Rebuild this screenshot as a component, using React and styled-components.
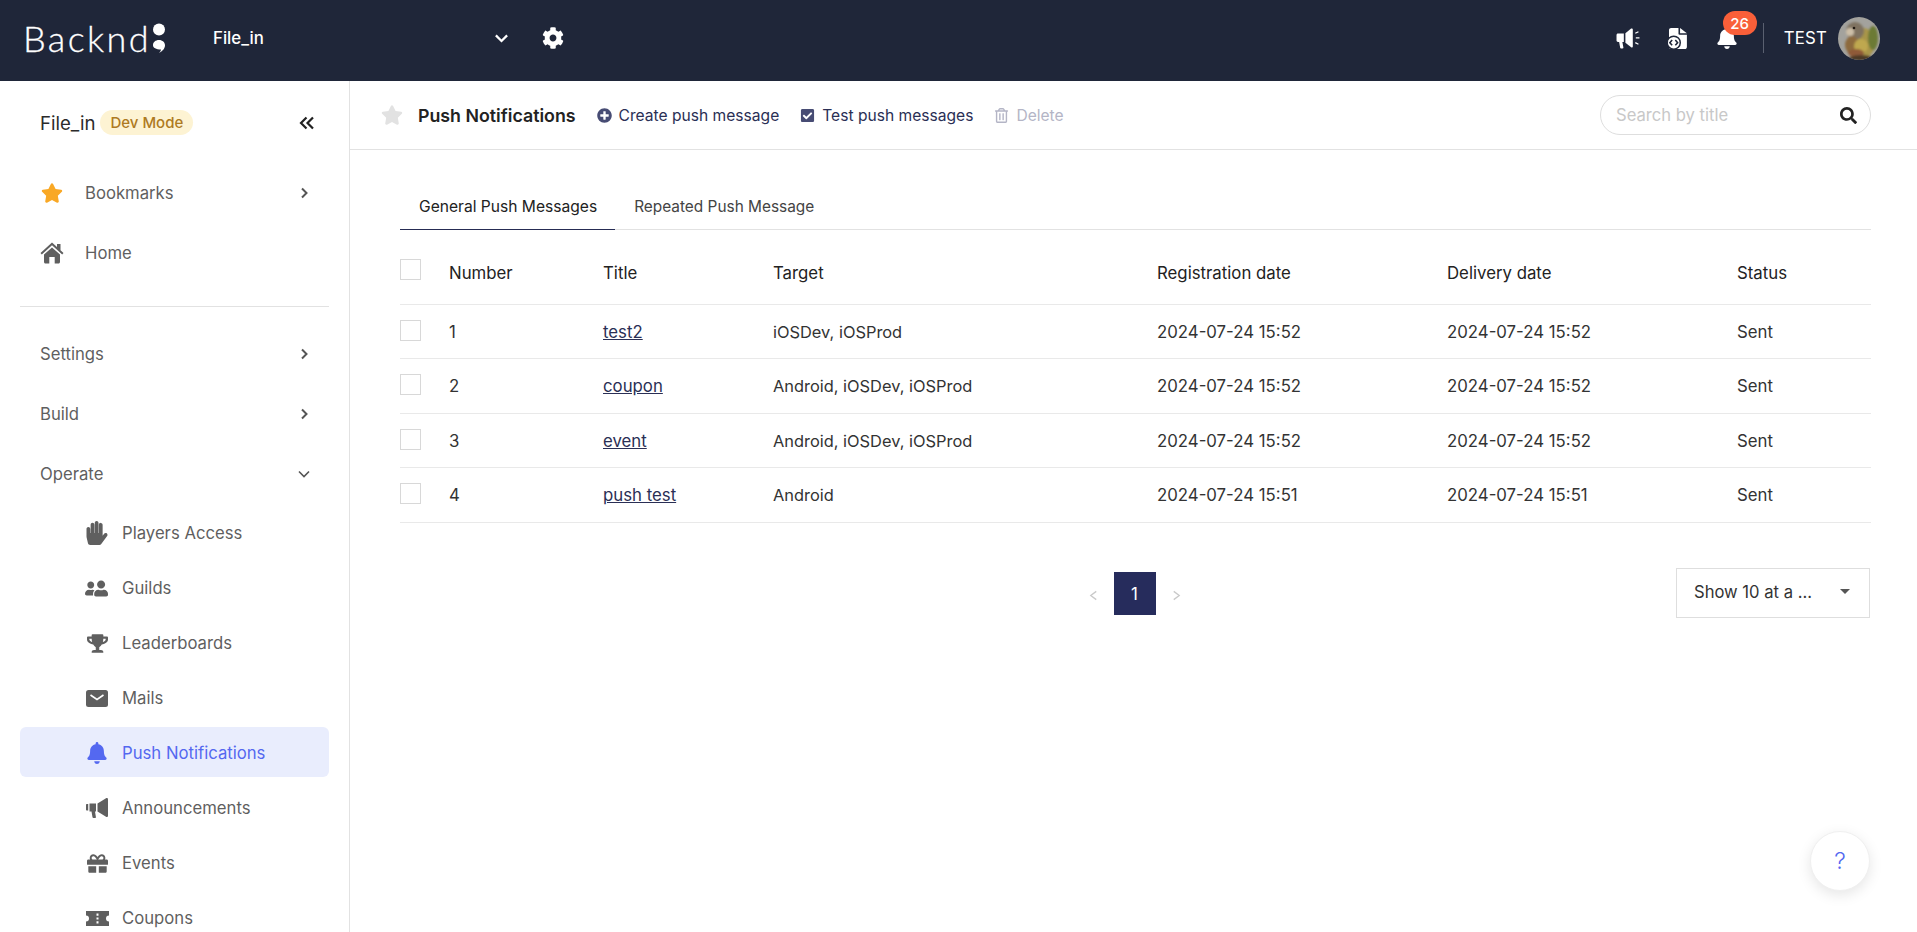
import React from 'react';
import styled, { createGlobalStyle } from 'styled-components';
import {
  FaStar, FaHandPaper, FaUserFriends, FaTrophy, FaBell, FaGift,
  FaCog, FaPlusCircle, FaCheckSquare, FaRegTrashAlt, FaSearch,
} from 'react-icons/fa';

const GlobalStyle = createGlobalStyle`
  html, body {
    margin: 0;
    height: 100%;
    overflow: hidden;
    background: #fff;
    font-family: Inter, "Liberation Sans", sans-serif;
    font-size: 16px;
    color: #2b2b2b;
  }
  * { box-sizing: border-box; }
`;

const Page = styled.div`
  display: flex;
  flex-direction: column;
  height: 100vh;
  position: relative;
`;

const TopBar = styled.header`
  flex: 0 0 81px;
  display: flex;
  align-items: center;
  padding: 0 37px 5px 24px;
  background: #1f2639;
  color: #fff;
`;

const Logo = styled.div`
  display: flex;
  align-items: center;
  width: 190px;
  gap: 1px;
  margin-left: -1px;
`;

const LogoText = styled.span`
  font-family: Lato, sans-serif;
  font-weight: 300;
  font-size: 36px;
  letter-spacing: 2.4px;
  line-height: 40px;
  -webkit-text-stroke: 0.3px #fff;
`;

const ProjectName = styled.div`
  width: 281px;
  font-size: 16.8px;
  font-weight: 500;
`;

const TopIconButton = styled.span`
  display: inline-flex;
  position: relative;
  align-items: center;
  justify-content: center;
  color: #fff;
  font-size: ${p => p.$size || 20}px;
  margin-left: ${p => p.$gap || 0}px;
`;

const TopRight = styled.div`
  margin-left: auto;
  display: flex;
  align-items: center;
`;

const Badge = styled.span`
  position: absolute;
  left: 7px;
  top: -16px;
  width: 34px;
  height: 24px;
  border-radius: 12px;
  background: #f95f39;
  color: #fff;
  font-size: 15px;
  font-weight: 500;
  display: flex;
  align-items: center;
  justify-content: center;
`;

const TopDivider = styled.span`
  width: 1px;
  height: 30px;
  background: #5a6070;
  margin: 0 20px 0 25px;
`;

const UserName = styled.span`
  font-size: 16.8px;
  margin-right: 11px;
  letter-spacing: 0.2px;
`;

const Avatar = styled.svg`
  width: 42px;
  height: 43px;
  border-radius: 50%;
  display: block;
`;

const Body = styled.div`
  flex: 1;
  display: flex;
  min-height: 0;
`;

const Sidebar = styled.aside`
  flex: 0 0 350px;
  border-right: 1px solid #e2e2e2;
  padding: 0 20px;
  overflow: hidden;
`;

const Brand = styled.div`
  height: 87px;
  display: flex;
  align-items: center;
  padding: 0 14px 4px 20px;
`;

const BrandName = styled.span`
  font-size: 18.6px;
  color: #2b2b2b;
  margin-right: 5px;
`;

const DevBadge = styled.span`
  height: 25px;
  padding: 0 10px;
  border-radius: 13px;
  background: #fdf3d3;
  color: #ae7a22;
  font-size: 15px;
  font-weight: 500;
  display: flex;
  align-items: center;
`;

const Collapse = styled.svg`
  margin-left: auto;
  width: 16px;
  height: 16px;
  fill: none;
  stroke: #222;
  stroke-width: 2.2;
`;

const MenuItem = styled.div`
  height: 50px;
  display: flex;
  align-items: center;
  border-radius: 6px;
  font-size: 16.7px;
  color: ${p => (p.$active ? '#5468f0' : '#5f5f5f')};
  background: ${p => (p.$active ? '#e9edfd' : 'transparent')};
  padding: ${p => (p.$sub ? 2 : 0)}px 19px 0 ${p => (p.$sub ? 64 : 20)}px;
  margin-bottom: ${p => (p.$sub ? 5 : 10)}px;
`;

const MenuIcon = styled.span`
  flex: 0 0 ${p => (p.$sub ? 26 : 24)}px;
  margin-right: ${p => (p.$sub ? 12 : 21)}px;
  display: flex;
  align-items: center;
  justify-content: center;
  font-size: ${p => p.$size || 22}px;
  color: ${p => p.$color || 'inherit'};
  transform: ${p => (p.$flip ? 'scaleX(-1)' : 'none')};
`;

const Chevron = styled.svg`
  margin-left: auto;
  width: 12px;
  height: 12px;
  fill: none;
  stroke: ${p => p.$color || '#555'};
  stroke-width: ${p => p.$weight || 2};
`;

const TopChevron = styled(Chevron)`
  margin-left: 0;
  width: 15px;
  height: 15px;
`;

const SideDivider = styled.div`
  height: 1px;
  background: #e2e2e2;
  margin: 28px 0 22px;
`;

const SubMenu = styled.div`
  margin-top: -2px;
`;

const Main = styled.main`
  flex: 1;
  min-width: 0;
`;

const Toolbar = styled.div`
  height: 69px;
  display: flex;
  align-items: center;
  border-bottom: 1px solid #e2e2e2;
  padding: 0 46px 0 31px;
`;

const BookmarkStar = styled.span`
  display: flex;
  color: #e2e2e2;
  font-size: 22px;
  margin-right: 15px;
`;

const PageTitle = styled.h1`
  margin: 0 21px 0 0;
  font-size: 17.8px;
  font-weight: 600;
  color: #222;
`;

const ToolAction = styled.button`
  display: flex;
  align-items: center;
  gap: 7px;
  padding: 0;
  margin-right: 21px;
  border: 0;
  background: none;
  font: inherit;
  font-size: 15.6px;
  color: ${p => (p.disabled ? '#b4b5c6' : '#2a2f55')};
  svg {
    color: ${p => (p.disabled ? '#b4b5c6' : '#474c74')};
    font-size: 15px;
  }
`;

const SearchBox = styled.div`
  margin-left: auto;
  width: 271px;
  height: 40px;
  border: 1px solid #dedede;
  border-radius: 20px;
  display: flex;
  align-items: center;
  padding: 0 13px 0 15px;
  svg { font-size: 17px; color: #222; flex: none; }
`;

const SearchInput = styled.input`
  flex: 1;
  min-width: 0;
  border: 0;
  outline: 0;
  padding: 0;
  font: inherit;
  font-size: 16.6px;
  &::placeholder { color: #c8c8c8; opacity: 1; }
`;

const Content = styled.div`
  padding: 33px 46px 0 50px;
`;

const Tabs = styled.div`
  display: flex;
  height: 47px;
  border-bottom: 1px solid #e2e2e2;
`;

const Tab = styled.div`
  display: flex;
  align-items: center;
  padding: 0 18px 0 19px;
  font-size: ${p => (p.$active ? 15.6 : 15.4)}px;
  color: ${p => (p.$active ? '#222' : '#444')};
  border-bottom: 1px solid ${p => (p.$active ? '#262c54' : 'transparent')};
  margin-bottom: -1px;
`;

const Table = styled.table`
  width: 100%;
  table-layout: fixed;
  border-collapse: collapse;
`;

const Th = styled.th`
  height: 74px;
  padding: ${p => (p.$box ? 8 : 13)}px 0 0;
  text-align: left;
  font-size: 16.8px;
  font-weight: 400;
  color: #222;
  border-bottom: 1px solid #e9e9e9;
  width: ${p => p.$w}px;
`;

const Td = styled.td`
  height: 54.5px;
  padding: 1px 0 0;
  font-size: ${p => p.$size || 16.8}px;
  color: #333;
  border-bottom: 1px solid #e9e9e9;
`;

const Check = styled.span`
  display: block;
  width: 21px;
  height: 21px;
  border: 1px solid #d8d8d8;
  margin-top: -3px;
`;

const TitleLink = styled.a`
  color: #2a2f55;
  text-decoration: underline;
`;

const Footer = styled.div`
  display: grid;
  grid-template-columns: 1fr auto 1fr;
  align-items: center;
  margin-top: 45px;
`;

const Pager = styled.div`
  grid-column: 2;
  display: flex;
  align-items: center;
  gap: 15px;
  padding: 2px 2px 0 0;
  svg { width: 11px; height: 11px; fill: none; stroke: #c9c9c9; stroke-width: 1.4; margin-top: 3px; }
`;

const PageNumber = styled.span`
  width: 42px;
  height: 43px;
  background: #262c5c;
  color: #fff;
  display: flex;
  align-items: center;
  justify-content: center;
  font-size: 16.8px;
`;

const PageSize = styled.div`
  grid-column: 3;
  justify-self: end;
  width: 194px;
  height: 50px;
  margin-right: 1px;
  border: 1px solid #dedede;
  display: flex;
  align-items: center;
  justify-content: space-between;
  padding: 0 19px 2px 17px;
  font-size: 16.6px;
  color: #333;
`;

const Caret = styled.span`
  width: 0;
  height: 0;
  border-left: 5px solid transparent;
  border-right: 5px solid transparent;
  border-top: 5px solid #555;
`;

const HelpButton = styled.button`
  position: absolute;
  left: 1810px;
  top: 831px;
  width: 60px;
  height: 60px;
  border-radius: 50%;
  border: 1px solid #f0f0f0;
  background: #fff;
  box-shadow: 0 4px 14px rgba(0, 0, 0, 0.1);
  color: #5468f0;
  font: inherit;
  font-size: 23px;
  font-weight: 300;
`;

const ChevronRight = () => (
  <Chevron viewBox="0 0 12 12"><polyline points="4,1.5 8.5,6 4,10.5" /></Chevron>
);

const ChevronDown = ({ weight }) => (
  <Chevron viewBox="0 0 12 12" $weight={weight}><polyline points="1,3.5 6,8.5 11,3.5" /></Chevron>
);

const HomeIcon = () => (
  <svg width="24" height="24" viewBox="0 0 24 24" fill="#5f5f5f">
    <path d="M12 1.500L17 6V3h3.500v6.200L23.500 12l-1.300 1.400L12 4.300 1.800 13.400.5 12z" />
    <path d="M12 6.500l8 7.100V21c0 .8-.7 1.500-1.500 1.500h-3.800v-6.500H9.300v6.500H5.500C4.700 22.500 4 21.800 4 21v-7.400z" />
  </svg>
);

const Megaphone = () => (
  <svg width="24" height="24" viewBox="0 0 24 24" fill="currentColor">
    <path d="M1 9c0-.6.4-1 1-1h1.200v6.500H2c-.6 0-1-.4-1-1z" />
    <path d="M4.500 7.500H11v8h-1l.9 5.500c.1.600-.3 1-.9 1H8.400c-.5 0-.8-.3-.9-.8l-1-5.700h-2z" />
    <path d="M12.500 7.500L21 2.200c.9-.5 2 .1 2 1.100v16.400c0 1-1.100 1.600-2 1.100l-8.500-5.300z" />
  </svg>
);

const HeadMegaphone = () => (
  <svg width="24" height="23" viewBox="0.5 1.500 23 22" fill="#fff">
    <path d="M1 9c0-.8.6-1.400 1.400-1.400H8v8.300H6.600l1 5.300c.1.500-.3.900-.8.900H5.300c-.4 0-.7-.3-.8-.7l-1-5.500H2.400C1.600 15.900 1 15.300 1 14.500z" />
    <path d="M9.500 7.400L15 3c.7-.5 1.600 0 1.600.8v16.400c0 .8-.9 1.300-1.600.8l-5.500-4.400z" />
    <path d="M19 7.500l3-1.500M19.500 12h3.500M19 16.500l3 1.500" stroke="#fff" strokeWidth="1.200" fill="none" />
  </svg>
);

const FileCode = () => (
  <svg width="20" height="23" viewBox="0.100 0.500 19 21" fill="#fff">
    <path d="M4 1h7v5.500c0 .5.400.9.900.9H19V19c0 1-.8 2-2 2H4c-1.100 0-2-1-2-2V3c0-1.100.9-2 2-2z" />
    <path d="M12.500 1l6.500 5h-6.500z" />
    <circle cx="6.500" cy="15" r="6.200" fill="#fff" stroke="#1f2639" strokeWidth="1.400" />
    <path d="M5 12.500L2.800 15 5 17.500M8 12.500l2.200 2.500L8 17.500" fill="none" stroke="#1f2639" strokeWidth="1.500" />
  </svg>
);

const MailIcon = () => (
  <svg width="22" height="17" viewBox="0 0 22 17">
    <rect width="22" height="17" rx="2.500" fill="#5f5f5f" />
    <path d="M4.500 5L11 9.500 17.500 5" fill="none" stroke="#fff" strokeWidth="1.600" />
  </svg>
);

const TicketIcon = () => (
  <svg width="23" height="15" viewBox="0 0 23 15" fill="#5f5f5f">
    <path fillRule="evenodd" d="M0 0h23v4.500a3 3 0 0 0 0 6V15H0v-4.500a3 3 0 0 0 0-6zM10.500 2.500v2.300h2V2.500zm0 4v2h2v-2zm0 3.700v2.300h2v-2.300z" />
  </svg>
);

const BirdAvatar = () => (
  <Avatar viewBox="0 0 42 43">
    <defs>
      <filter id="soft"><feGaussianBlur stdDeviation="1.200" /></filter>
    </defs>
    <rect width="42" height="43" fill="#a3a29d" />
    <g filter="url(#soft)">
      <ellipse cx="25" cy="26" rx="12" ry="15" fill="#a8954a" />
      <ellipse cx="35" cy="21" rx="5" ry="12" fill="#6c7a35" />
      <ellipse cx="17" cy="14" rx="9" ry="9" fill="#7f7260" />
      <ellipse cx="12" cy="15" rx="4" ry="4" fill="#cdbfa8" />
      <ellipse cx="14" cy="28" rx="7" ry="9" fill="#8d6a3e" />
      <ellipse cx="23" cy="29" rx="7" ry="7" fill="#bfa850" />
      <ellipse cx="18" cy="36" rx="8" ry="4" fill="#8f5a38" />
      <ellipse cx="23" cy="41" rx="12" ry="3" fill="#4d3a28" />
    </g>
    <circle cx="16" cy="11" r="1.300" fill="#221a12" />
  </Avatar>
);

const messages = [
  { id: 1, title: 'test2', target: 'iOSDev, iOSProd', registered: '2024-07-24 15:52', delivered: '2024-07-24 15:52' },
  { id: 2, title: 'coupon', target: 'Android, iOSDev, iOSProd', registered: '2024-07-24 15:52', delivered: '2024-07-24 15:52' },
  { id: 3, title: 'event', target: 'Android, iOSDev, iOSProd', registered: '2024-07-24 15:52', delivered: '2024-07-24 15:52' },
  { id: 4, title: 'push test', target: 'Android', registered: '2024-07-24 15:51', delivered: '2024-07-24 15:51' },
];

const operateItems = [
  { label: 'Players Access', icon: <FaHandPaper />, size: 24, flip: true },
  { label: 'Guilds', icon: <FaUserFriends />, flip: true, size: 23 },
  { label: 'Leaderboards', icon: <FaTrophy />, size: 21 },
  { label: 'Mails', icon: <MailIcon /> },
  { label: 'Push Notifications', icon: <FaBell />, active: true, size: 22 },
  { label: 'Announcements', icon: <Megaphone /> },
  { label: 'Events', icon: <FaGift />, size: 21 },
  { label: 'Coupons', icon: <TicketIcon /> },
];

export default function App() {
  return (
    <Page>
      <GlobalStyle />
      <TopBar>
        <Logo>
          <LogoText>Backnd</LogoText>
          <svg width="14" height="30" viewBox="0 0 14 30" fill="#fff">
            <circle cx="7" cy="6.500" r="6" />
            <path d="M7 17c3.500 0 6 2.300 6 5.300 0 3.200-2.500 6-6 7.700 1.300-1.400 1.900-2.400 2-3.500C4 26.500 1 24.800 1 22.200 1 19.200 3.500 17 7 17z" />
          </svg>
        </Logo>
        <ProjectName>File_in</ProjectName>
        <TopChevron viewBox="0 0 12 12" $color="#fff" $weight={1.8}>
          <polyline points="1.500,3.500 6,8 10.500,3.500" />
        </TopChevron>
        <TopIconButton $gap={33} $size={22}><FaCog /></TopIconButton>
        <TopRight>
          <TopIconButton><HeadMegaphone /></TopIconButton>
          <TopIconButton $gap={27}><FileCode /></TopIconButton>
          <TopIconButton $gap={29} $size={22}>
            <FaBell />
            <Badge>26</Badge>
          </TopIconButton>
          <TopDivider />
          <UserName>TEST</UserName>
          <BirdAvatar />
        </TopRight>
      </TopBar>
      <Body>
        <Sidebar>
          <Brand>
            <BrandName>File_in</BrandName>
            <DevBadge>Dev Mode</DevBadge>
            <Collapse viewBox="0 0 16 16">
              <polyline points="7.500,2.500 2,8 7.500,13.500" />
              <polyline points="14,2.500 8.500,8 14,13.500" />
            </Collapse>
          </Brand>
          <MenuItem>
            <MenuIcon $color="#f9a825"><FaStar /></MenuIcon>
            Bookmarks
            <ChevronRight />
          </MenuItem>
          <MenuItem>
            <MenuIcon><HomeIcon /></MenuIcon>
            Home
          </MenuItem>
          <SideDivider />
          <MenuItem>Settings<ChevronRight /></MenuItem>
          <MenuItem>Build<ChevronRight /></MenuItem>
          <MenuItem>Operate<ChevronDown weight={1.6} /></MenuItem>
          <SubMenu>
            {operateItems.map(item => (
              <MenuItem key={item.label} $sub $active={item.active}>
                <MenuIcon $sub $flip={item.flip} $size={item.size}>{item.icon}</MenuIcon>
                {item.label}
              </MenuItem>
            ))}
          </SubMenu>
        </Sidebar>
        <Main>
          <Toolbar>
            <BookmarkStar><FaStar /></BookmarkStar>
            <PageTitle>Push Notifications</PageTitle>
            <ToolAction><FaPlusCircle />Create push message</ToolAction>
            <ToolAction><FaCheckSquare />Test push messages</ToolAction>
            <ToolAction disabled><FaRegTrashAlt />Delete</ToolAction>
            <SearchBox>
              <SearchInput placeholder="Search by title" />
              <FaSearch />
            </SearchBox>
          </Toolbar>
          <Content>
            <Tabs>
              <Tab $active>General Push Messages</Tab>
              <Tab>Repeated Push Message</Tab>
            </Tabs>
            <Table>
              <thead>
                <tr>
                  <Th $w={49} $box><Check /></Th>
                  <Th $w={154}>Number</Th>
                  <Th $w={170}>Title</Th>
                  <Th $w={384}>Target</Th>
                  <Th $w={290}>Registration date</Th>
                  <Th $w={290}>Delivery date</Th>
                  <Th $w={134}>Status</Th>
                </tr>
              </thead>
              <tbody>
                {messages.map(msg => (
                  <tr key={msg.id}>
                    <Td><Check /></Td>
                    <Td>{msg.id}</Td>
                    <Td><TitleLink href="#">{msg.title}</TitleLink></Td>
                    <Td $size={16.4}>{msg.target}</Td>
                    <Td>{msg.registered}</Td>
                    <Td>{msg.delivered}</Td>
                    <Td>Sent</Td>
                  </tr>
                ))}
              </tbody>
            </Table>
            <Footer>
              <Pager>
                <svg viewBox="0 0 12 12"><polyline points="9,1.500 3,6 9,10.500" /></svg>
                <PageNumber>1</PageNumber>
                <svg viewBox="0 0 12 12"><polyline points="3,1.500 9,6 3,10.500" /></svg>
              </Pager>
              <PageSize>
                Show 10 at a ...
                <Caret />
              </PageSize>
            </Footer>
          </Content>
        </Main>
      </Body>
      <HelpButton>?</HelpButton>
    </Page>
  );
}
